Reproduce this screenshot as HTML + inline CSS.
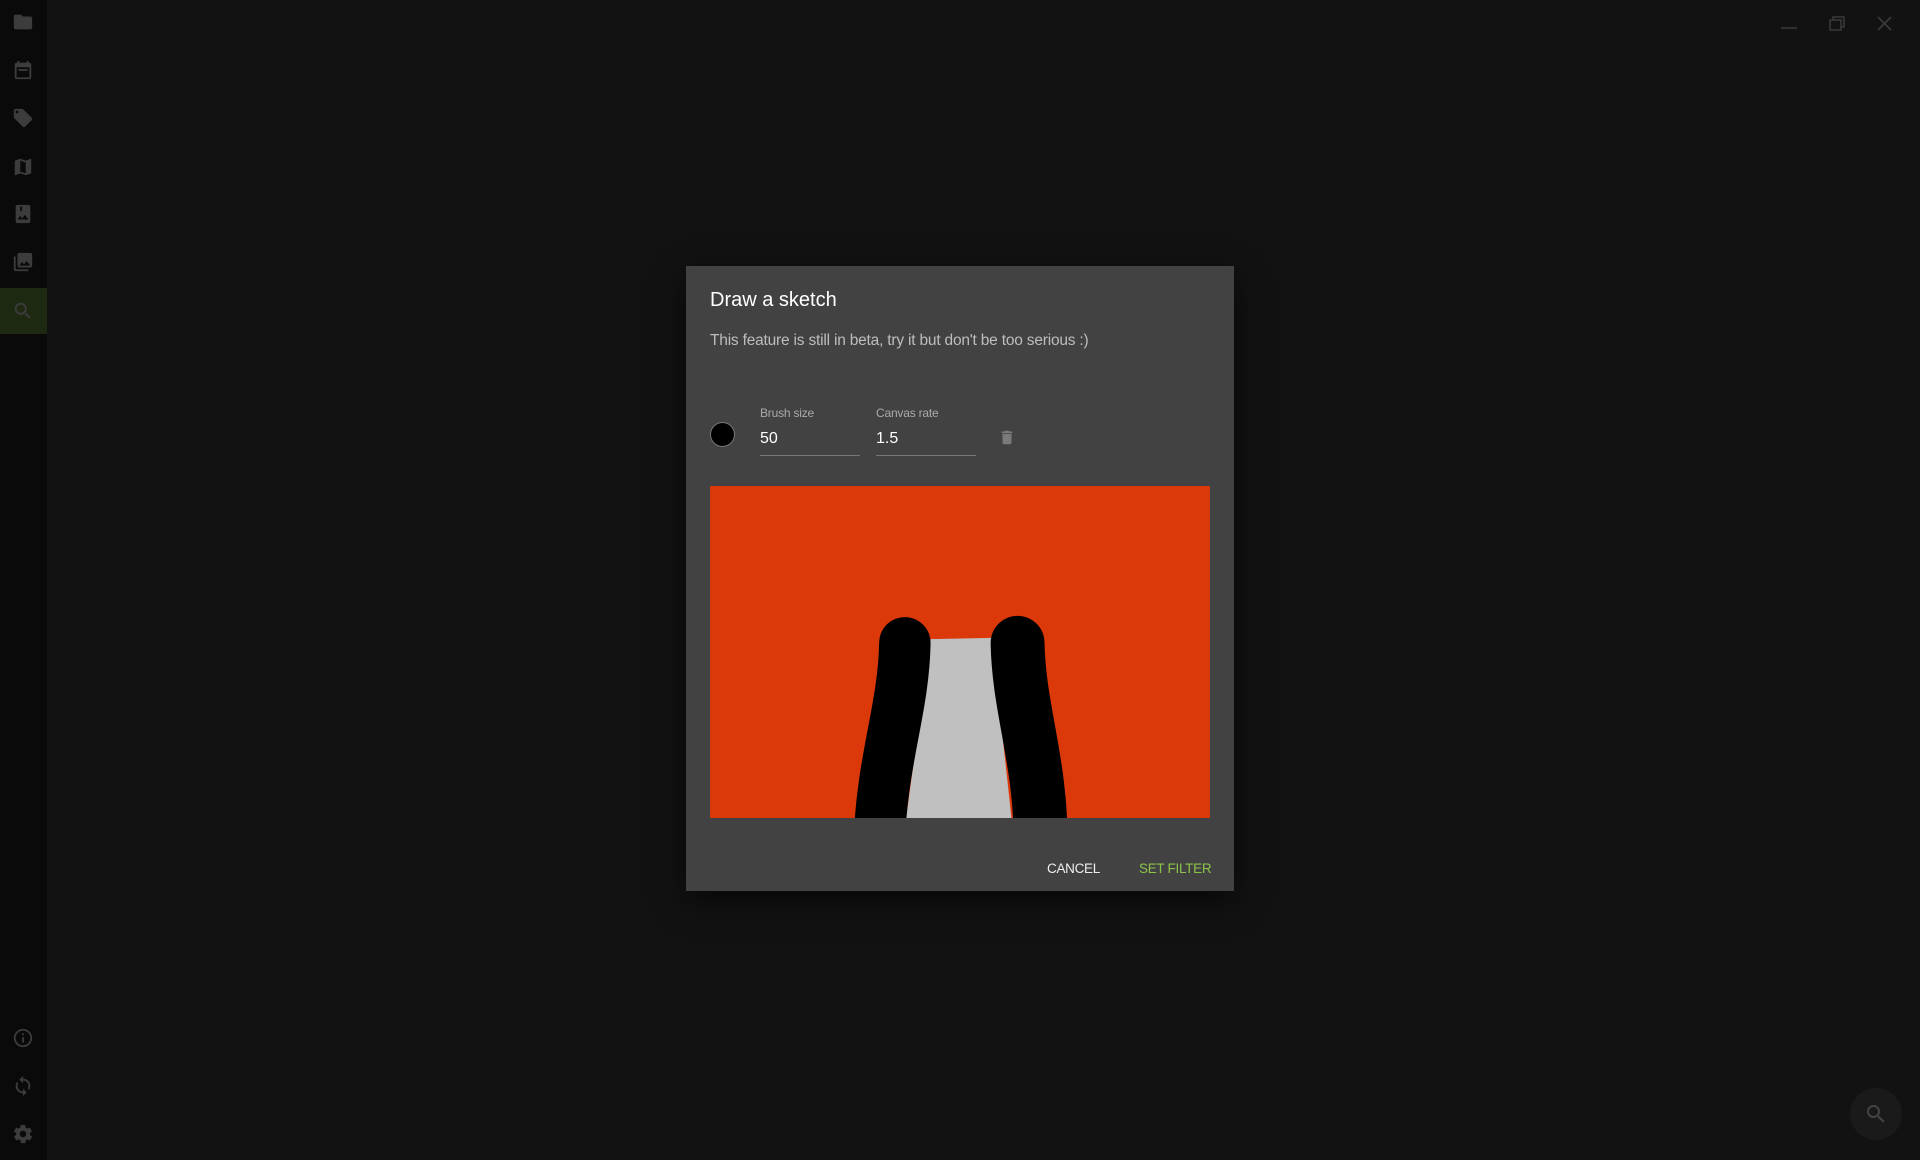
<!DOCTYPE html>
<html><head><meta charset="utf-8"><style>
body{margin:0;width:1920px;height:1160px;background:#121212;font-family:"Liberation Sans",sans-serif;position:relative;overflow:hidden}
.side{position:absolute;left:0;top:0;width:47px;height:1160px;background:#0a0a0a}
.ic{position:absolute;left:12px;width:22px;height:22px}
.dlg{position:absolute;left:686px;top:266px;width:548px;height:625px;background:#424242;box-shadow:0 10px 30px rgba(0,0,0,.6)}
.t{position:absolute;left:24px;top:23px;font-size:20px;color:#fff}
.s{position:absolute;left:24px;top:66px;font-size:15.5px;color:#bdbdbd;letter-spacing:-0.2px}
.lab{position:absolute;font-size:12px;color:#aaa;top:140px;letter-spacing:-0.2px}
.inp{position:absolute;top:162px;font-size:16px;color:#fff;border-bottom:1px solid #777;width:100px;height:25px;padding-top:2px}
.btn{position:absolute;top:595px;font-size:13.5px;letter-spacing:-0.3px}
</style></head><body>
<div class="side">
<svg class="ic" style="top:11px" viewBox="0 0 24 24"><path fill="#3c3c3c" d="M10 4H4c-1.1 0-2 .9-2 2v12c0 1.1.9 2 2 2h16c1.1 0 2-.9 2-2V8c0-1.1-.9-2-2-2h-8z"/></svg>
<svg class="ic" style="top:59px" viewBox="0 0 24 24"><path fill="#3c3c3c" d="M19 4h-1V2h-2v2H8V2H6v2H5c-1.1 0-2 .9-2 2v14c0 1.1.9 2 2 2h14c1.1 0 2-.9 2-2V6c0-1.1-.9-2-2-2zm0 16H5V9h14z"/><path fill="#3c3c3c" d="M7 11h10v2H7z"/></svg>
<svg class="ic" style="top:107px" viewBox="0 0 24 24"><path fill="#3c3c3c" d="M21.4 11.6l-9-9C12.1 2.2 11.6 2 11 2H4c-1.1 0-2 .9-2 2v7c0 .6.2 1.1.6 1.4l9 9c.4.4.9.6 1.4.6s1-.2 1.4-.6l7-7c.4-.4.6-.9.6-1.4s-.2-1-.6-1.4zM5.5 7C4.7 7 4 6.3 4 5.5S4.7 4 5.5 4 7 4.7 7 5.5 6.3 7 5.5 7z"/></svg>
<svg class="ic" style="top:156px" viewBox="0 0 24 24"><path fill="#3c3c3c" d="M20.5 3l-.2.0L15 5.1 9 3 3.4 4.9c-.2.1-.4.3-.4.5V20.5c0 .3.2.5.5.5l.2-.0L9 18.9l6 2.1 5.6-1.9c.2-.1.4-.3.4-.5V3.5c0-.3-.2-.5-.5-.5zM15 19l-6-2.1V5l6 2.1z"/></svg>
<svg class="ic" style="top:203px" viewBox="0 0 24 24"><path fill="#3c3c3c" d="M18 2H6c-1.1 0-2 .9-2 2v16c0 1.1.9 2 2 2h12c1.1 0 2-.9 2-2V4c0-1.1-.9-2-2-2zM9 4h2v5l-1-.75L9 9zm-3 14l3-4 2 3 3-4 4 5z"/></svg>
<svg class="ic" style="top:251px" viewBox="0 0 24 24"><path fill="#3c3c3c" d="M22 16V4c0-1.1-.9-2-2-2H8c-1.1 0-2 .9-2 2v12c0 1.1.9 2 2 2h12c1.1 0 2-.9 2-2zm-11-4l2 2.7 3-3.7 4 5H8zM2 6v14c0 1.1.9 2 2 2h14v-2H4V6z"/></svg>
<div style="position:absolute;left:0;top:288px;width:47px;height:46px;background:#1e2912"></div>
<svg class="ic" style="top:300px" viewBox="0 0 24 24"><path fill="#3c3c3c" d="M15.5 14h-.8l-.3-.3C15.4 12.6 16 11.1 16 9.5 16 5.9 13.1 3 9.5 3S3 5.9 3 9.5 5.9 16 9.5 16c1.6 0 3.1-.6 4.2-1.6l.3.3v.8l5 5 1.5-1.5zm-6 0C7 14 5 12 5 9.5S7 5 9.5 5 14 7 14 9.5 12 14 9.5 14z"/></svg>
<svg class="ic" style="top:1027px" viewBox="0 0 24 24"><path fill="#3c3c3c" d="M11 7h2v2h-2zm0 4h2v6h-2zm1-9C6.5 2 2 6.5 2 12s4.5 10 10 10 10-4.5 10-10S17.5 2 12 2zm0 18c-4.4 0-8-3.6-8-8s3.6-8 8-8 8 3.6 8 8-3.6 8-8 8z"/></svg>
<svg class="ic" style="top:1075px" viewBox="0 0 24 24"><path fill="#3c3c3c" d="M12 4V1L8 5l4 4V6c3.3 0 6 2.7 6 6 0 1-.3 2-.7 2.8l1.5 1.5C19.5 15 20 13.6 20 12c0-4.4-3.6-8-8-8zm0 14c-3.3 0-6-2.7-6-6 0-1 .3-2 .7-2.8L5.2 7.700C4.5 9 4 10.4 4 12c0 4.4 3.6 8 8 8v3l4-4-4-4z"/></svg>
<svg class="ic" style="top:1123px" viewBox="0 0 24 24"><path fill="#3c3c3c" d="M19.4 13c0-.3.1-.6.1-1s0-.7-.1-1l2.1-1.6c.2-.2.2-.4.1-.6l-2-3.5c-.1-.2-.4-.3-.6-.2l-2.5 1c-.5-.4-1.1-.7-1.7-1l-.4-2.600c0-.2-.2-.4-.5-.4h-4c-.2 0-.5.2-.5.4l-.4 2.6c-.6.3-1.2.6-1.7 1l-2.5-1c-.2-.1-.5 0-.6.2l-2 3.5c-.1.2-.1.5.1.6L4.6 11c0 .3-.1.7-.1 1s0 .7.1 1l-2.1 1.6c-.2.2-.2.4-.1.6l2 3.5c.1.2.4.3.6.2l2.5-1c.5.4 1.1.7 1.7 1l.4 2.6c0 .2.2.4.5.4h4c.2 0 .5-.2.5-.4l.4-2.6c.6-.3 1.2-.6 1.7-1l2.5 1c.2.1.5 0 .6-.2l2-3.5c.1-.2.1-.5-.1-.6zM12 15.5c-1.9 0-3.5-1.6-3.5-3.5s1.6-3.5 3.5-3.5 3.5 1.6 3.5 3.5-1.6 3.5-3.5 3.5z"/></svg>
</div>
<svg style="position:absolute;left:1777px;top:14px" width="120" height="20" viewBox="0 0 120 20"><path d="M4 14h16" stroke="#3a3a3a" stroke-width="1.5"/><rect x="53" y="6" width="11" height="10" fill="none" stroke="#3a3a3a" stroke-width="1.5"/><path d="M56 6V3h11v10h-3" fill="none" stroke="#3a3a3a" stroke-width="1.5"/><path d="M101 3l13 13M114 3l-13 13" stroke="#3a3a3a" stroke-width="1.8"/></svg>
<div style="position:absolute;left:1850px;top:1088px;width:52px;height:52px;border-radius:50%;background:#1a1a1a"></div>
<svg style="position:absolute;left:1864px;top:1102px" width="24" height="24" viewBox="0 0 24 24"><path fill="#444" d="M15.5 14h-.8l-.3-.3C15.4 12.6 16 11.1 16 9.5 16 5.9 13.1 3 9.5 3S3 5.9 3 9.5 5.9 16 9.5 16c1.6 0 3.1-.6 4.2-1.6l.3.3v.8l5 5 1.5-1.5zm-6 0C7 14 5 12 5 9.5S7 5 9.5 5 14 7 14 9.5 12 14 9.5 14z"/></svg>
<div class="dlg">
<div class="t">Draw a sketch</div>
<div class="s">This feature is still in beta, try it but don't be too serious :)</div>
<div style="position:absolute;left:24px;top:156px;width:23px;height:23px;border-radius:50%;background:#000;border:1px solid #777"></div>
<div class="lab" style="left:74px">Brush size</div><div class="inp" style="left:74px">50</div>
<div class="lab" style="left:190px">Canvas rate</div><div class="inp" style="left:190px">1.5</div>
<svg style="position:absolute;left:312px;top:161px" width="18" height="21" viewBox="0 0 24 24"><path fill="#7a7a7a" d="M6 19c0 1.1.9 2 2 2h8c1.1 0 2-.9 2-2V7H6zM19 4h-3.5l-1-1h-5l-1 1H5v2h14z"/></svg>
<svg style="position:absolute;left:24px;top:220px" width="500" height="332" viewBox="580 397 408 271"><rect x="580" y="397" width="408" height="271" fill="#dc390b"/><path d="M760 522 L810 521 L826 668 L740 668 Z" fill="#c0c0c0"/><path d="M739 525 C738 580 720 620 718 690" stroke="#000" stroke-width="42" fill="none" stroke-linecap="round"/><path d="M831 525 C832 580 850 620 850 690" stroke="#000" stroke-width="44" fill="none" stroke-linecap="round"/><rect x="580" y="668" width="408" height="30" fill="#424242"/></svg>
<div class="btn" style="left:361px;color:#eee">CANCEL</div>
<div class="btn" style="left:453px;color:#8bc34a">SET FILTER</div>
</div>
</body></html>
